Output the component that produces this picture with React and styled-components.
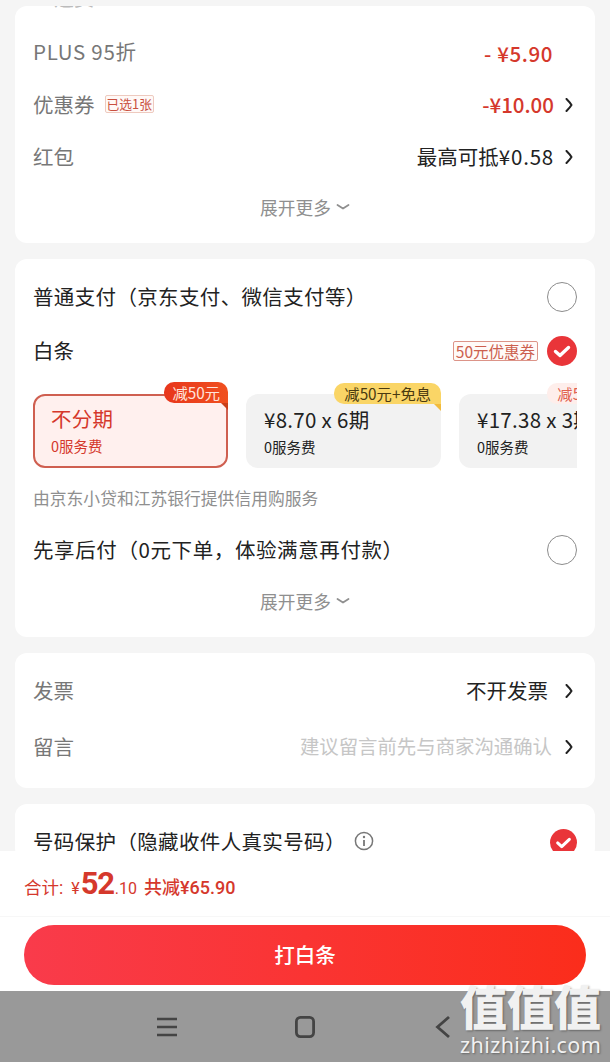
import React from 'react';
import styled, { createGlobalStyle } from 'styled-components';

const colors = {
  page: '#f5f5f5',
  white: '#fff',
  black: '#222',
  gray: '#777',
  lightGray: '#8f8f8f',
  paleGray: '#c6c6c6',
  red: '#d5382c',
  check: '#e93539',
};

const GlobalStyle = createGlobalStyle`
  html, body {
    margin: 0;
    padding: 0;
    background: ${colors.page};
  }
  body {
    font-family: "Noto Sans CJK SC", "Noto Sans", sans-serif;
    text-spacing-trim: space-all;
  }
  * {
    box-sizing: border-box;
  }
`;

const Screen = styled.div`
  display: flex;
  flex-direction: column;
  height: 1062px;
  overflow: hidden;
  position: relative;
`;

const Scroller = styled.div`
  flex: 1;
  min-height: 0;
  overflow: hidden;
  display: flex;
  flex-direction: column;
  gap: 16px;
  padding: 6px 15px 0;
`;

const Card = styled.section`
  flex-shrink: 0;
  background: ${colors.white};
  border-radius: 12px;
  padding: ${(p) => p.$padding || '0 18px'};
  overflow: hidden;
`;

const ClippedRow = styled.div`
  height: 2px;
  overflow: hidden;
  display: flex;
  justify-content: space-between;
  align-items: flex-end;
  font-size: 20px;
  line-height: 20px;
  padding-right: 25px;
  color: ${colors.black};
  span:first-child {
    color: #bbb;
    padding-left: 21px;
  }
`;

const Row = styled.div`
  display: flex;
  align-items: center;
  justify-content: space-between;
  height: ${(p) => p.$height || 52}px;
  margin-top: ${(p) => p.$top || 0}px;
  font-size: 20.5px;
  line-height: 26px;
`;

const Label = styled.span`
  display: flex;
  align-items: center;
  padding-bottom: 2px;
  color: ${(p) => (p.$dark ? colors.black : colors.gray)};
  letter-spacing: ${(p) => p.$spacing || 0}px;
`;

const Value = styled.span`
  display: flex;
  align-items: center;
  gap: ${(p) => p.$gap || 11}px;
  padding: ${(p) => p.$padding || '0 0 2px'};
  color: ${(p) => {
    if (p.$tone === 'red') return colors.red;
    if (p.$tone === 'pale') return colors.paleGray;
    return colors.black;
  }};
  font-size: ${(p) => p.$size || 20.5}px;
  font-weight: ${(p) => p.$weight || 400};
  letter-spacing: ${(p) => p.$spacing || 0}px;
`;

const Num = styled.span`
  letter-spacing: 0.8px;
`;

const SmallTag = styled.span`
  border: 1px solid #eecabf;
  background: #fff9f7;
  color: #c9503f;
  font-size: 12.8px;
  line-height: 16px;
  padding: 0 1px;
  margin-left: 10px;
  border-radius: 2px;
  white-space: nowrap;
`;

const CouponTag = styled.span`
  border: 1px solid #dc9488;
  background: #fffaf8;
  color: #cc5f4f;
  font-size: 15.5px;
  line-height: 18px;
  padding: 0 2px;
  border-radius: 2px;
  white-space: nowrap;
`;

const Expand = styled.div`
  display: flex;
  align-items: center;
  justify-content: center;
  gap: 5px;
  height: ${(p) => p.$height}px;
  margin-bottom: ${(p) => p.$bottom}px;
  color: ${colors.lightGray};
  font-size: 17.7px;
`;

const Radio = styled.span`
  width: 30px;
  height: 30px;
  border-radius: 50%;
  border: 1px solid #8c8c8c;
  background: ${colors.white};
  flex-shrink: 0;
`;

const CheckWrap = styled.span`
  display: flex;
  align-items: center;
  gap: 9px;
`;

const Plans = styled.div`
  display: flex;
  gap: 18px;
  overflow: hidden;
  padding-top: 12px;
`;

const Plan = styled.div`
  position: relative;
  flex: 0 0 195px;
  height: 74px;
  border-radius: 12px;
  padding: ${(p) => (p.$active ? '8px 16px 0' : '11px 18px 0')};
  background: ${(p) => (p.$active ? '#fff0ee' : '#f2f2f2')};
  border: ${(p) => (p.$active ? '2px solid #cf5f50' : 'none')};
  color: ${(p) => (p.$active ? colors.red : colors.black)};
`;

const PlanTitle = styled.div`
  font-size: 20.5px;
  line-height: 28px;
  letter-spacing: 0.3px;
  white-space: nowrap;
`;

const PlanFee = styled.div`
  font-size: 14.5px;
  line-height: 22px;
  margin-top: 3px;
`;

const tagTones = {
  orange: 'background: linear-gradient(90deg, #e8361c, #f0501f); color: #ffe4dc;',
  gold: 'background: #fad566; color: #4a3a10;',
  pink: 'background: #feeeeb; color: #e0604f;',
};

const foldTones = { orange: '#c9401a', gold: '#f2bb3c', pink: '#fbd8d0' };

const PlanTag = styled.span`
  position: absolute;
  top: ${(p) => (p.$active ? '-14px' : '-11px')};
  right: ${(p) => (p.$active ? '-2px' : '0')};
  height: 21px;
  padding: 0 ${(p) => (p.$active ? 8 : 10)}px;
  border-radius: 10px 10px 0 10px;
  font-size: 15.3px;
  line-height: 21px;
  white-space: nowrap;
  ${(p) => tagTones[p.$tone]}
  &::after {
    content: '';
    position: absolute;
    right: 0;
    top: 21px;
    border-top: 7px solid ${(p) => foldTones[p.$tone]};
    border-left: 7px solid transparent;
  }
`;

const Note = styled.div`
  color: ${colors.lightGray};
  font-size: 16.8px;
  line-height: 24px;
  margin-top: 18px;
`;

const InfoIcon = styled.span`
  display: flex;
  margin-left: 8px;
`;

const ChevronIcon = styled.svg`
  margin: 2px 4px 0 0;
  flex-shrink: 0;
`;

const Footer = styled.footer`
  flex-shrink: 0;
  background: ${colors.white};
  height: 140px;
`;

const Totals = styled.div`
  display: flex;
  align-items: baseline;
  height: 66px;
  padding: 13px 24px 0;
  border-bottom: 1px solid #f7f7f7;
  color: ${colors.red};
  font-size: 17.5px;
  line-height: 40px;
  font-family: "Roboto", "Noto Sans CJK SC", sans-serif;
`;

const Yen = styled.span`
  margin-left: 8px;
  font-size: 16px;
`;

const BigPrice = styled.span`
  font-size: 31px;
  font-weight: 700;
  letter-spacing: -1.2px;
  margin-left: 1px;
  margin-right: 1px;
`;

const Cents = styled.span`
  font-size: 16px;
`;

const Saved = styled.span`
  margin-left: 7px;
  font-weight: 500;
  font-size: 18px;
`;

const PayButton = styled.button`
  display: block;
  width: 562px;
  height: 60px;
  margin: 8px 24px 0;
  padding: 0 0 2px;
  border: 0;
  border-radius: 30px;
  background: linear-gradient(90deg, #f93b4b, #fb2d1b);
  color: ${colors.white};
  font-family: inherit;
  font-size: 20.5px;
  font-weight: 500;
`;

const NavBar = styled.nav`
  flex-shrink: 0;
  height: 71px;
  background: #999;
  display: grid;
  grid-template-columns: 138px 138px 138px;
  justify-content: center;
  justify-items: center;
  align-items: center;
  color: #444;
`;

const Watermark = styled.div`
  position: absolute;
  right: 9px;
  bottom: 6px;
  width: 141px;
  color: #f1f1f1;
  text-align: center;
  text-shadow: 1px 1px 2px rgba(0, 0, 0, 0.35);
`;

const WatermarkMark = styled.div`
  font-size: 47px;
  font-weight: 900;
  line-height: 50px;
  white-space: nowrap;
`;

const WatermarkSite = styled.div`
  font-family: "Noto Sans", sans-serif;
  font-size: 21.5px;
  line-height: 22px;
  letter-spacing: 0.4px;
  margin-top: 4px;
  white-space: nowrap;
`;

const Chevron = () => (
  <ChevronIcon width="8" height="14" viewBox="0 0 8 14" fill="none">
    <path d="M1.5 1 Q5 4.5 6.5 7 Q5 9.5 1.5 13" stroke="#222" strokeWidth="2" strokeLinecap="round" strokeLinejoin="round" />
  </ChevronIcon>
);

const ChevronDown = () => (
  <svg width="14" height="8" viewBox="0 0 14 8" fill="none">
    <path d="M1.5 2 L7 5.5 L12.5 2" stroke="#8f8f8f" strokeWidth="1.8" strokeLinecap="round" strokeLinejoin="round" />
  </svg>
);

const Check = ({ size = 30 }) => (
  <svg width={size} height={size} viewBox="0 0 30 30">
    <circle cx="15" cy="15" r="15" fill={colors.check} />
    <path d="M8.5 15.5 L13 19.5 L21.5 11.5" fill="none" stroke="#fff" strokeWidth="3.4" strokeLinecap="round" strokeLinejoin="round" />
  </svg>
);

const Info = () => (
  <svg width="20" height="20" viewBox="0 0 20 20" fill="none">
    <circle cx="10" cy="10" r="8.6" stroke="#777" strokeWidth="1.5" />
    <circle cx="10" cy="6" r="1.2" fill="#777" />
    <path d="M10 9 V15" stroke="#777" strokeWidth="1.8" />
  </svg>
);

const MenuIcon = () => (
  <svg width="24" height="22" viewBox="0 0 24 22" fill="none" stroke="currentColor" strokeWidth="2.6">
    <path d="M2 3 H22 M2 11 H22 M2 19 H22" />
  </svg>
);

const HomeIcon = () => (
  <svg width="22" height="24" viewBox="0 0 22 24" fill="none" stroke="currentColor" strokeWidth="2.8">
    <rect x="2.4" y="2.4" width="17.2" height="19.2" rx="4" />
  </svg>
);

const BackIcon = () => (
  <svg width="16" height="24" viewBox="0 0 16 24" fill="none" stroke="currentColor" strokeWidth="2.8">
    <path d="M14 2 L2.5 12 L14 22" />
  </svg>
);

const App = () => (
  <Screen>
    <GlobalStyle />
    <Scroller>
      <Card>
        <ClippedRow>
          <span>运费</span>
          <span>¥0.00</span>
        </ClippedRow>
        <Row $height={72} $top={8}>
          <Label $spacing={0.7}>PLUS 95折</Label>
          <Value $tone="red" $weight={500} $spacing={0.6} $padding="2px 24px 0 0">- ¥5.90</Value>
        </Row>
        <Row $height={34}>
          <Label>优惠券<SmallTag>已选1张</SmallTag></Label>
          <Value $tone="red" $weight={500}>-¥10.00<Chevron /></Value>
        </Row>
        <Row $height={70}>
          <Label>红包</Label>
          <Value>
            <span>最高可抵<Num>¥0.58</Num></span>
            <Chevron />
          </Value>
        </Row>
        <Expand $height={30} $bottom={21}>展开更多<ChevronDown /></Expand>
      </Card>

      <Card>
        <Row $height={38} $top={19}>
          <Label $dark $spacing={0.35}>普通支付（京东支付、微信支付等）</Label>
          <Radio />
        </Row>
        <Row $height={62} $top={4}>
          <Label $dark>白条</Label>
          <CheckWrap>
            <CouponTag>50元优惠券</CouponTag>
            <Check />
          </CheckWrap>
        </Row>
        <Plans>
          <Plan $active>
            <PlanTag $active $tone="orange">减50元</PlanTag>
            <PlanTitle>不分期</PlanTitle>
            <PlanFee>0服务费</PlanFee>
          </Plan>
          <Plan>
            <PlanTag $tone="gold">减50元+免息</PlanTag>
            <PlanTitle>¥8.70 x 6期</PlanTitle>
            <PlanFee>0服务费</PlanFee>
          </Plan>
          <Plan>
            <PlanTag $tone="pink">减50元+免息</PlanTag>
            <PlanTitle>¥17.38 x 3期</PlanTitle>
            <PlanFee>0服务费</PlanFee>
          </Plan>
        </Plans>
        <Note>由京东小贷和江苏银行提供信用购服务</Note>
        <Row $height={40} $top={20}>
          <Label $dark $spacing={0.6}>先享后付（0元下单，体验满意再付款）</Label>
          <Radio />
        </Row>
        <Expand $height={62} $bottom={5}>展开更多<ChevronDown /></Expand>
      </Card>

      <Card $padding="10px 18px 13px">
        <Row $height={56}>
          <Label>发票</Label>
          <Value $gap={17}>不开发票<Chevron /></Value>
        </Row>
        <Row $height={56}>
          <Label>留言</Label>
          <Value $tone="pale" $size={19.4} $gap={13}>建议留言前先与商家沟通确认<Chevron /></Value>
        </Row>
      </Card>

      <Card $padding="20px 18px 0">
        <Row $height={36}>
          <Label $dark $spacing={0.35}>
            号码保护（隐藏收件人真实号码）
            <InfoIcon><Info /></InfoIcon>
          </Label>
          <Check size={27} />
        </Row>
      </Card>
    </Scroller>

    <Footer>
      <Totals>
        <span>合计:</span>
        <Yen>¥</Yen>
        <BigPrice>52</BigPrice>
        <Cents>.10</Cents>
        <Saved>共减¥65.90</Saved>
      </Totals>
      <PayButton>打白条</PayButton>
    </Footer>

    <NavBar>
      <MenuIcon />
      <HomeIcon />
      <BackIcon />
    </NavBar>

    <Watermark>
      <WatermarkMark>值值值</WatermarkMark>
      <WatermarkSite>zhizhizhi.com</WatermarkSite>
    </Watermark>
  </Screen>
);

export default App;
